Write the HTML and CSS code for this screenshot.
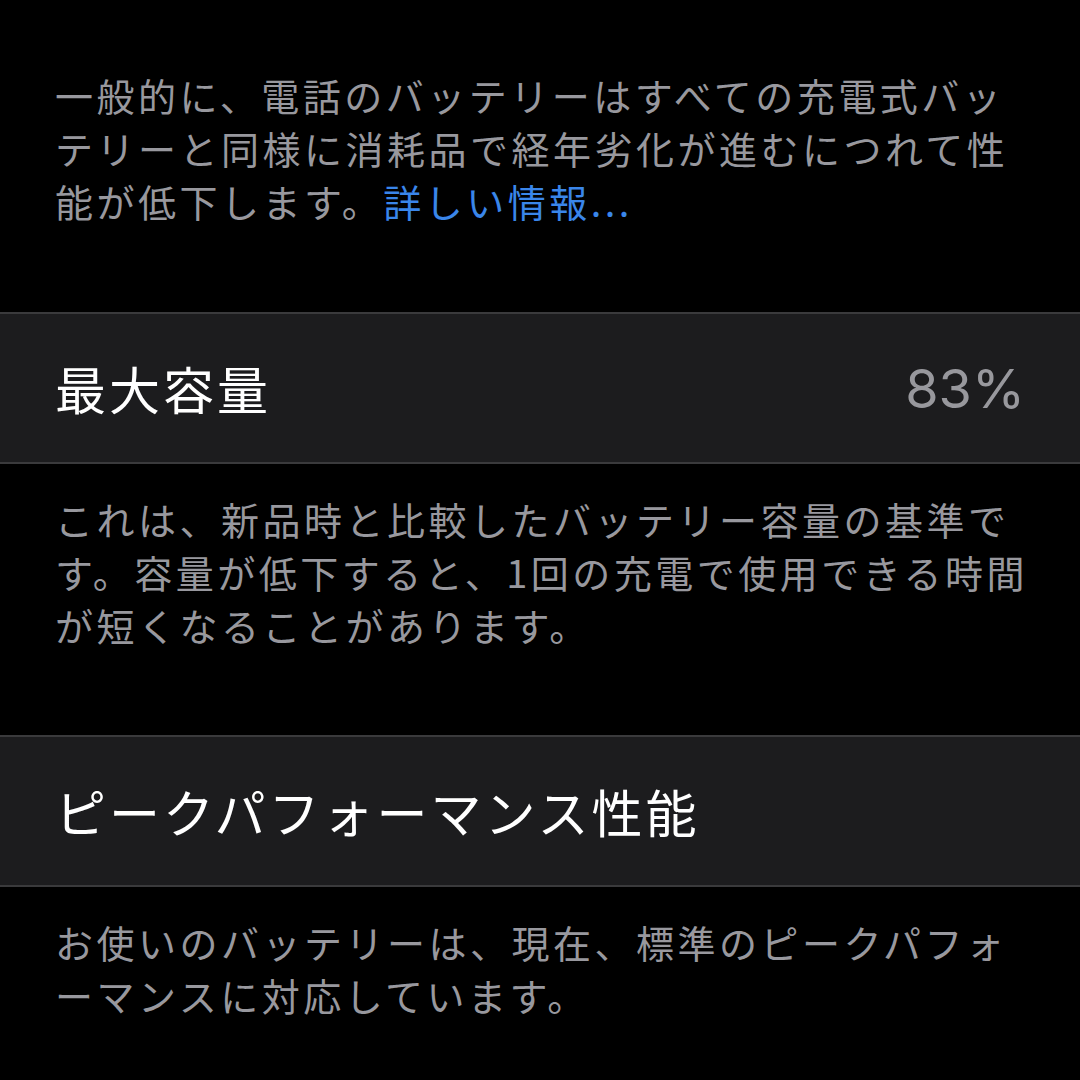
FILE: index.html
```html
<!DOCTYPE html>
<html lang="ja">
<head>
<meta charset="utf-8">
<link rel="stylesheet" href="styles.css">
</head>
<body>
<main class="screen">
  <p class="note note-first">一般的に、電話のバッテリーはすべての充電式バッ<br>テリーと同様に消耗品で経年劣化が進むにつれて性<br>能が低下します。<span class="link">詳しい情報...</span></p>
  <div class="row">
    <span class="row-title">最大容量</span>
    <span class="row-value">83%</span>
  </div>
  <p class="note">これは、新品時と比較したバッテリー容量の基準で<br>す。容量が低下すると、1回の充電で使用できる時間<br>が短くなることがあります。</p>
  <div class="row">
    <span class="row-title">ピークパフォーマンス性能</span>
  </div>
  <p class="note">お使いのバッテリーは、現在、標準のピークパフォ<br>ーマンスに対応しています。</p>
</main>
</body>
</html>
```
FILE: styles.css
```css
html, body {
  margin: 0;
  padding: 0;
  background: #000;
}
body {
  width: 1080px;
  height: 1080px;
  overflow: hidden;
  font-family: "Noto Sans CJK JP", "Noto Sans", sans-serif;
}
.screen {
  display: flex;
  flex-direction: column;
}
.note {
  margin: 0;
  padding: 28px 40px 84px 55px;
  font-size: 38px;
  line-height: 53px;
  letter-spacing: 3.5px;
  color: #98989e;
  white-space: nowrap;
}
.note-first {
  padding-top: 68px;
  padding-bottom: 85px;
}
.link {
  color: #3a86ea;
}
.row {
  display: flex;
  align-items: center;
  justify-content: space-between;
  height: 148px;
  padding: 0 55px 0 55px;
  background: #1c1c1e;
  border-top: 2px solid #3a3a3c;
  border-bottom: 2px solid #3a3a3c;
}
.row-title {
  font-size: 51px;
  letter-spacing: 3px;
  color: #fff;
}
.row-value {
  font-family: Inter, "Noto Sans", sans-serif;
  font-size: 54px;
  color: #98989d;
}
```
